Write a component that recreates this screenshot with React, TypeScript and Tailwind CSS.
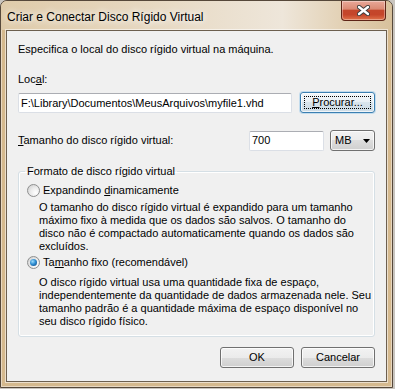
import { ReactNode } from 'react';

function Win7Button({ children, width, focused }: { children: ReactNode; width: string; focused?: boolean }) {
  return (
    <button
      className={
        focused
          ? `relative ${width} h-[21px] rounded-[3px] border border-[#3c7fb1] bg-[linear-gradient(to_bottom,#f3f7fa_0%,#e8eff4_50%,#d9e5ed_50%,#cddbe5_100%)] shadow-[0_0_0_1px_rgba(140,195,232,0.45),inset_0_0_0_1px_rgba(255,255,255,0.7)] text-black`
          : `relative ${width} h-[21px] rounded-[3px] border border-[#707070] bg-[linear-gradient(to_bottom,#f2f2f2_0%,#ebebeb_50%,#dddddd_50%,#cfcfcf_100%)] shadow-[inset_0_0_0_1px_rgba(255,255,255,0.75)] text-black`
      }
    >
      {focused && <span className="absolute inset-[3px] border border-dotted border-black" />}
      <span className="relative">{children}</span>
    </button>
  );
}

function Radio({ checked }: { checked?: boolean }) {
  return (
    <span className="flex w-[13px] h-[13px] shrink-0 items-center justify-center rounded-full border border-[#8e8f8f] bg-[radial-gradient(circle_at_70%_70%,#ffffff_0%,#ececec_45%,#c9c9c9_100%)]">
      {checked && (
        <span className="w-[7px] h-[7px] rounded-full bg-[radial-gradient(circle_at_38%_35%,#9fdcfb_0%,#2f8fd3_45%,#0c3d78_100%)]" />
      )}
    </span>
  );
}

function TextBox({ children, width }: { children: ReactNode; width: string }) {
  return (
    <div
      className={`${width} h-[20px] flex items-center pl-[2px] rounded-[2px] border border-[#dbdfe6] border-t-[#abadb3] bg-white whitespace-nowrap overflow-hidden`}
    >
      {children}
    </div>
  );
}

export default function App() {
  return (
    <div className="w-[395px] h-[389px] overflow-hidden bg-[#c9c5bf] font-['Liberation_Sans',Arial,sans-serif]">
      <div className="flex flex-col w-[393px] h-[388px] rounded-t-[7px] border border-[#56483a] bg-[#d5b98e] shadow-[inset_0_0_0_1px_rgba(255,255,255,0.45)]">
        {/* title bar */}
        <div className="flex h-[29px] rounded-t-[6px] bg-[linear-gradient(to_right,#dfcbaa_0%,#e6d7bf_35%,#eee6da_72%,#e2d0b3_88%,#d8c19c_100%)]">
          <div className="flex-1 pl-[6px] pt-[9px] text-[12px] leading-[14px] text-black [text-shadow:0_0_6px_#fff,0_0_10px_#fff]">
            Criar e Conectar Disco Rígido Virtual
          </div>
          <div className="mr-[6px] flex w-[45px] h-[20px] items-center justify-center rounded-b-[4px] border border-t-0 border-[#5e2416] bg-[linear-gradient(to_bottom,#e9a899_0%,#db8a74_42%,#c4462b_50%,#c5452a_72%,#e0724a_100%)] shadow-[inset_0_0_0_1px_rgba(255,255,255,0.35)]">
            <svg width="13" height="11" viewBox="0 0 13 11">
              <path d="M2 2 L11 9 M11 2 L2 9" stroke="#3b3b3b" strokeWidth="4.2" strokeLinecap="round" />
              <path d="M2 2 L11 9 M11 2 L2 9" stroke="#ffffff" strokeWidth="2.4" strokeLinecap="round" />
            </svg>
          </div>
        </div>

        {/* client area */}
        <div className="px-[5px]">
          <div className="flex flex-col h-[352px] border border-[#6c5f4f] bg-[#f0f0f0] pl-[11px] pr-[11px] pt-[12px] text-[11px] leading-[13px] text-black shadow-[0_0_0_1px_rgba(255,255,255,0.55)]">
            <p>Especifica o local do disco rígido virtual na máquina.</p>

            <p className="mt-[17px]">
              Loc<u>a</u>l:
            </p>
            <div className="mt-[6px] flex items-end h-[21px]">
              <TextBox width="w-[276px]">F:\Library\Documentos\MeusArquivos\myfile1.vhd</TextBox>
              <div className="ml-[8px]">
                <Win7Button width="w-[75px]" focused>
                  <u>P</u>rocurar...
                </Win7Button>
              </div>
            </div>

            <div className="mt-[17px] flex items-center h-[21px]">
              <p className="flex-1">
                <u>T</u>amanho do disco rígido virtual:
              </p>
              <TextBox width="w-[75px]">700</TextBox>
              <div className="ml-[6px] flex w-[45px] h-[21px] items-center justify-between pl-[4px] pr-[4px] rounded-[3px] border border-[#707070] bg-[linear-gradient(to_bottom,#f2f2f2_0%,#ebebeb_50%,#dddddd_50%,#cfcfcf_100%)] shadow-[inset_0_0_0_1px_rgba(255,255,255,0.75)]">
                <span>MB</span>
                <svg width="7" height="4" viewBox="0 0 7 4">
                  <path d="M0 0 H7 L3.5 4 Z" fill="#000" />
                </svg>
              </div>
            </div>

            <fieldset className="mt-[13px] rounded-[3px] border border-[#d5dfe5] pl-[8px] pt-[5px] pb-[8px] shadow-[inset_0_0_0_1px_#ffffff]">
              <legend className="-ml-[2px] px-[2px] leading-[14px]">Formato de disco rígido virtual</legend>

              <div className="flex items-center h-[14px]">
                <Radio />
                <span className="ml-[3px]">
                  Expandindo <u>d</u>inamicamente
                </span>
              </div>
              <p className="ml-[12px] mt-[4px] whitespace-nowrap">
                O tamanho do disco rígido virtual é expandido para um tamanho
                <br />
                máximo fixo à medida que os dados são salvos. O tamanho do
                <br />
                disco não é compactado automaticamente quando os dados são
                <br />
                excluídos.
              </p>

              <div className="mt-[2px] flex items-center h-[14px]">
                <Radio checked />
                <span className="ml-[3px]">
                  Ta<u>m</u>anho fixo (recomendável)
                </span>
              </div>
              <p className="ml-[12px] mt-[7px] whitespace-nowrap">
                O disco rígido virtual usa uma quantidade fixa de espaço,
                <br />
                independentemente da quantidade de dados armazenada nele. Seu
                <br />
                tamanho padrão é a quantidade máxima de espaço disponível no
                <br />
                seu disco rígido físico.
              </p>
            </fieldset>

            <div className="mt-[10px] flex justify-end gap-[7px]">
              <Win7Button width="w-[74px]">OK</Win7Button>
              <Win7Button width="w-[74px]">Cancelar</Win7Button>
            </div>
          </div>
        </div>
      </div>
    </div>
  );
}
